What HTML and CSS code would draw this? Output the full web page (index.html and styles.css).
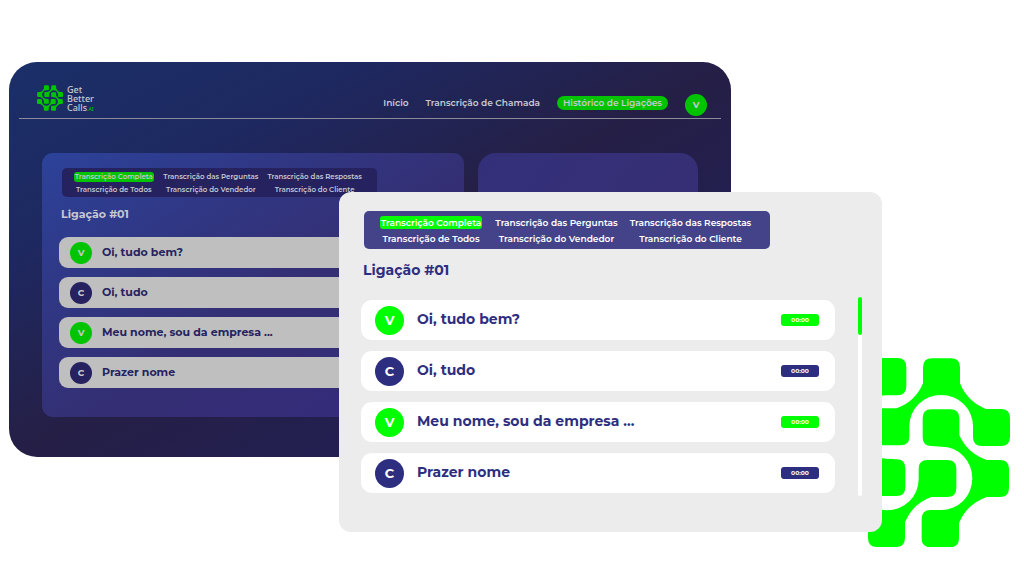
FILE: index.html
```
<!DOCTYPE html>
<html lang="pt-BR">
<head>
    <meta charset="UTF-8">
    <meta name="viewport" content="width=device-width, initial-scale=1.0">
    <title>Get Better Calls</title>
    <link rel="stylesheet" href="styles.css">
</head>
<body>
    <svg class="defs" aria-hidden="true">
        <symbol id="logo" viewBox="234 54 576 568">
            <g id="logo-half">
                <path d="M576 55H633Q660 55 660 82V130Q682 185 738 207H783Q810 207 810 234V291Q810 318 783 318H726Q699 318 699 291V258A95.500 93 0 0 0 508 258V290Q508 316 481 316H422Q395 316 395 290V232Q395 205 422 205H470Q526 185 549 130V82Q549 55 576 55Z"/>
                <path d="M574 208H631Q658 208 658 235V285Q680 338 740 360H780Q807 360 807 387V444Q807 471 780 471H740Q679 493 657 550V595Q657 622 630 622H572Q545 622 545 595V537Q545 510 572 510H605A92 95 0 0 0 605 320L574 318Q548 318 548 291V235Q548 208 574 208Z"/>
            </g>
            <use href="#logo-half" transform="rotate(180 522 338)"/>
        </symbol>
    </svg>

    <main class="hero">
        <section class="window">
            <header class="header">
                <div class="brand">
                    <svg class="brand-logo" aria-hidden="true"><use href="#logo"/></svg>
                    <div class="brand-name">
                        <p>Get</p>
                        <p>Better</p>
                        <p class="brand-last">Calls<span class="brand-ai">.AI</span></p>
                    </div>
                </div>
                <nav class="menu">
                    <a href="#">Início</a>
                    <a href="#">Transcrição de Chamada</a>
                    <a href="#" class="active">Histórico de Ligações</a>
                    <span class="avatar seller">V</span>
                </nav>
            </header>
            <div class="panels">
                <div class="panel">
                    <div class="tabs">
                        <button type="button" class="active">Transcrição Completa</button>
                        <button type="button">Transcrição das Perguntas</button>
                        <button type="button">Transcrição das Respostas</button>
                        <button type="button">Transcrição de Todos</button>
                        <button type="button">Transcrição do Vendedor</button>
                        <button type="button">Transcrição do Cliente</button>
                    </div>
                    <h2>Ligação #01</h2>
                    <ul class="messages">
                        <li><span class="avatar seller">V</span><p>Oi, tudo bem?</p></li>
                        <li><span class="avatar client">C</span><p>Oi, tudo</p></li>
                        <li><span class="avatar seller">V</span><p>Meu nome, sou da empresa ...</p></li>
                        <li><span class="avatar client">C</span><p>Prazer nome</p></li>
                    </ul>
                </div>
                <div class="panel panel-side"></div>
            </div>
        </section>

        <svg class="mark" viewBox="0 0 576 568" aria-hidden="true"><use href="#logo"/></svg>

        <section class="card">
            <div class="tabs">
                <button type="button" class="active">Transcrição Completa</button>
                <button type="button">Transcrição das Perguntas</button>
                <button type="button">Transcrição das Respostas</button>
                <button type="button">Transcrição de Todos</button>
                <button type="button">Transcrição do Vendedor</button>
                <button type="button">Transcrição do Cliente</button>
            </div>
            <h2>Ligação #01</h2>
            <div class="scroll">
                <ul class="messages">
                    <li><span class="avatar seller">V</span><p>Oi, tudo bem?</p><time class="seller">00:00</time></li>
                    <li><span class="avatar client">C</span><p>Oi, tudo</p><time class="client">00:00</time></li>
                    <li><span class="avatar seller">V</span><p>Meu nome, sou da empresa ...</p><time class="seller">00:00</time></li>
                    <li><span class="avatar client">C</span><p>Prazer nome</p><time class="client">00:00</time></li>
                </ul>
                <div class="track"><div class="thumb"></div></div>
            </div>
        </section>
    </main>
</body>
</html>
```

FILE: styles.css
```
* {
    box-sizing: border-box;
    margin: 0;
    padding: 0;
}
body {
    font-family: Montserrat, Inter, sans-serif;
    font-weight: 700;
    background-color: #fff;
}
.defs {
    display: block;
    width: 0;
    height: 0;
}
a {
    color: inherit;
    text-decoration: none;
}
button {
    border: none;
    background: none;
    color: inherit;
    font: inherit;
    cursor: pointer;
    white-space: nowrap;
}

/* the window, the logo and the card overlap on shared columns */
.hero {
    display: grid;
    grid-template-columns: 9fr 330fr 392fr 87fr 64fr 128fr 14fr;
    align-items: start;
    padding: 62px 0 29px;
}
.window,
.card,
.mark {
    grid-row: 1;
    min-width: 0;
}
.window {
    grid-column: 2 / 4;
    padding: 23px 10px 40px;
    border-radius: 28px;
    background: linear-gradient(to bottom right, #1b2f68, #1e2860 25%, #251f46 50%, #221f52 75%, #221f56);
    color: #c8c8d2;
}
.mark {
    grid-column: 5 / 7;
    width: 100%;
    margin-top: 296px;
    fill: #00ff00;
}
.card {
    grid-column: 3 / 6;
    margin-top: 130px;
    padding: 19px 20px 36px 22px;
    border-radius: 12px;
    background-color: #ececec;
    color: #2d2e7f;
}

/* header */
.header {
    display: flex;
    justify-content: space-between;
    align-items: flex-end;
    padding: 0 14px 2px 18px;
    border-bottom: 1px solid #8b8b9b;
}
.brand {
    display: flex;
    gap: 4px;
    padding-bottom: 4px;
}
.brand-logo {
    width: 26px;
    height: 26px;
    fill: #00c400;
}
.brand-name {
    font-family: "Noto Sans", sans-serif;
    font-size: 9px;
    font-weight: 500;
    line-height: 9px;
}
.brand-last {
    display: flex;
    align-items: baseline;
}
.brand-ai {
    color: #00c400;
    font-size: 5px;
    line-height: 5px;
}
.menu {
    display: flex;
    align-items: center;
    font-size: 9px;
    font-weight: 600;
    line-height: 14px;
}
.menu a {
    margin: 0 17px 4px 0;
}
.menu .active {
    padding: 0 6px;
    border-radius: 7px;
    background-color: #00c400;
}

/* panels */
.panels {
    display: grid;
    grid-template-columns: 421fr 220fr;
    gap: 14px;
    margin: 34px 23px 0;
}
.panel {
    min-width: 0;
    padding: 15px 17px 29px;
    border-radius: 11px;
    background: linear-gradient(to bottom right, #2c429a, #313580 35%, #342f74 55%, #352a7c);
}
.panel-side {
    border-radius: 18px;
    background: linear-gradient(to bottom right, #33307a, #382e70);
}
.tabs {
    display: grid;
    grid-template-columns: 102fr 119fr 119fr;
    max-width: 406px;
    margin-left: 3px;
    border-radius: 5px;
    background-color: #44438a;
    color: #fff;
    font-weight: 600;
}
.tabs button {
    display: flex;
    justify-content: center;
    min-width: 0;
    border-radius: 3px;
}
.card .tabs {
    gap: 3px 15px;
    padding: 5px 20px 4px 16px;
    font-size: 9px;
    line-height: 13px;
}
.card .tabs .active {
    background-color: #00ff00;
}
.panel .tabs {
    gap: 3px 11px;
    max-width: 315px;
    padding: 4px 16px 2px 12px;
    background-color: #25225f;
    color: #c8c8d2;
    font-size: 7px;
    line-height: 10px;
}
.panel .tabs .active {
    background-color: #00c400;
}
h2 {
    margin-left: 2px;
    font-size: 14px;
    line-height: 20px;
}
.card h2 {
    margin-top: 11px;
}
.panel h2 {
    margin-top: 7px;
    font-size: 11px;
}

/* messages */
.messages {
    display: grid;
    flex: 1;
    gap: 11px;
    list-style: none;
}
.messages li {
    display: flex;
    align-items: center;
    gap: 13px;
    height: 40px;
    padding: 0 16px 0 14px;
    border-radius: 11px;
    background-color: #fff;
    font-size: 14px;
}
.messages p {
    flex: 1;
    padding-bottom: 2px;
}
.messages time {
    width: 38px;
    border-radius: 3px;
    color: #fff;
    font-size: 6px;
    line-height: 12px;
    text-align: center;
}
.panel .messages {
    gap: 9px;
    margin-top: 13px;
}
.panel .messages li {
    gap: 10px;
    height: 31px;
    padding: 0 11px;
    border-radius: 9px;
    background-color: #bfbfbf;
    color: #25225f;
    font-size: 11px;
}
.avatar {
    display: flex;
    justify-content: center;
    align-items: center;
    width: 29px;
    height: 29px;
    border-radius: 50%;
    color: #fff;
    font-size: 13px;
}
.seller {
    background-color: #00ff00;
}
.client {
    background-color: #2d2e7f;
}
.window .avatar {
    width: 22px;
    height: 22px;
    color: #c8c8d2;
    font-size: 9px;
    font-weight: 700;
}
.window .seller {
    background-color: #00c400;
}
.window .client {
    background-color: #25225f;
}

/* scroll area */
.scroll {
    display: flex;
    gap: 23px;
    margin-top: 17px;
}
.scroll .messages {
    padding: 3px 0;
}
.track {
    width: 4px;
    border-radius: 2px;
    background-color: #fff;
}
.thumb {
    height: 38px;
    border-radius: 2px;
    background-color: #00ff00;
}
```
